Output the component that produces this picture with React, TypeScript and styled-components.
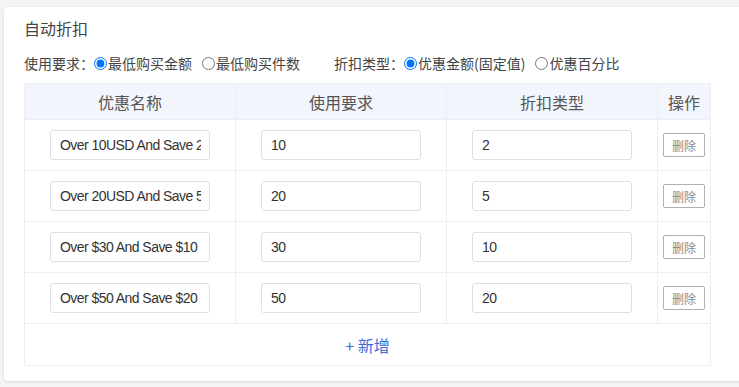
import React from "react";
import styled, { createGlobalStyle } from "styled-components";

const Global = createGlobalStyle`
  html, body { margin: 0; padding: 0; background: #f3f4f6; overflow: hidden; }
  body { font-family: "Noto Sans CJK SC", "Liberation Sans", sans-serif; }
  * { box-sizing: border-box; }
`;

const Page = styled.div`
  padding: 7px 0 0 4px;
  width: 739px;
  height: 387px;
`;

const Card = styled.div`
  width: 745px;
  background: #fff;
  border-radius: 4px;
  box-shadow: 0 1px 3px rgba(0, 0, 0, 0.12);
  padding: 10px 20px 15px 20px;
`;

const Title = styled.div`
  font-size: 16px;
  line-height: 22px;
  color: #444;
  font-family: "Noto Sans CJK SC", sans-serif;
`;

const Options = styled.div`
  margin-top: 14px;
  display: flex;
  align-items: center;
  height: 20px;
  font-size: 14px;
  color: #444;
  font-family: "Noto Sans CJK SC", sans-serif;
`;

const Group = styled.div<{ $gap?: number }>`
  display: flex;
  align-items: center;
  margin-right: ${(p) => p.$gap ?? 0}px;
`;

const GroupLabel = styled.span`
  white-space: nowrap;
`;

const RadioLabel = styled.label`
  display: flex;
  align-items: center;
  white-space: nowrap;
  margin-right: 10px;
  &:last-child { margin-right: 0; }
`;

const Radio = styled.input`
  width: 13px;
  height: 13px;
  margin: 0 1px 0 0;
`;

const Table = styled.table`
  margin-top: 10px;
  width: 686px;
  border-collapse: collapse;
  table-layout: fixed;
  border: 1px solid #ebeef5;
`;

const Th = styled.th`
  height: 36px;
  padding: 0;
  background: #f2f5fc;
  border: 1px solid #ebeef5;
  font-weight: normal;
  font-size: 16px;
  color: #555;
  font-family: "Noto Sans CJK SC", sans-serif;
  text-align: center;
`;

const Td = styled.td`
  height: 51px;
  padding: 0;
  border: 1px solid #ebeef5;
  text-align: center;
  vertical-align: middle;
`;

const AddTd = styled.td`
  height: 42px;
  padding: 0;
  border: 1px solid #ebeef5;
  text-align: center;
  vertical-align: middle;
`;

const TextInput = styled.input`
  width: 160px;
  height: 30px;
  border: 1px solid #dcdfe6;
  border-radius: 3px;
  padding: 0 8px 0 9px;
  font-size: 14px;
  letter-spacing: -0.55px;
  font-family: "Liberation Sans", Arial, sans-serif;
  color: #333;
  outline: none;
  background: #fff;
  display: block;
  margin: 0 auto;
`;

const DelButton = styled.button`
  width: 42px;
  height: 24px;
  padding: 0;
  border: 1px solid #b0b0b0;
  border-radius: 2px;
  background: #fff;
  color: #8a8a8a;
  font-size: 12px;
  font-family: "Noto Sans CJK SC", sans-serif;
  display: block;
  margin: 0 auto;
`;

const AddLink = styled.span`
  font-size: 16px;
  color: #3c6bd6;
  font-family: "Noto Sans CJK SC", sans-serif;
`;

const rows = [
  { name: "Over 10USD And Save 2USD", req: "10", val: "2" },
  { name: "Over 20USD And Save 5USD", req: "20", val: "5" },
  { name: "Over $30 And Save $10", req: "30", val: "10" },
  { name: "Over $50 And Save $20", req: "50", val: "20" },
];

export default function App() {
  return (
    <>
      <Global />
      <Page>
        <Card>
          <Title>自动折扣</Title>
          <Options>
            <Group $gap={34}>
              <GroupLabel>使用要求：</GroupLabel>
              <RadioLabel>
                <Radio type="radio" name="req" defaultChecked />
                最低购买金额
              </RadioLabel>
              <RadioLabel>
                <Radio type="radio" name="req" />
                最低购买件数
              </RadioLabel>
            </Group>
            <Group>
              <GroupLabel>折扣类型：</GroupLabel>
              <RadioLabel>
                <Radio type="radio" name="type" defaultChecked />
                优惠金额(固定值)
              </RadioLabel>
              <RadioLabel>
                <Radio type="radio" name="type" />
                优惠百分比
              </RadioLabel>
            </Group>
          </Options>
          <Table>
            <colgroup>
              <col style={{ width: 211 }} />
              <col style={{ width: 211 }} />
              <col style={{ width: 211 }} />
              <col style={{ width: 53 }} />
            </colgroup>
            <thead>
              <tr>
                <Th>优惠名称</Th>
                <Th>使用要求</Th>
                <Th>折扣类型</Th>
                <Th>操作</Th>
              </tr>
            </thead>
            <tbody>
              {rows.map((r, i) => (
                <tr key={i}>
                  <Td>
                    <TextInput defaultValue={r.name} />
                  </Td>
                  <Td>
                    <TextInput defaultValue={r.req} />
                  </Td>
                  <Td>
                    <TextInput defaultValue={r.val} />
                  </Td>
                  <Td>
                    <DelButton>删除</DelButton>
                  </Td>
                </tr>
              ))}
              <tr>
                <AddTd colSpan={4}>
                  <AddLink>+ 新增</AddLink>
                </AddTd>
              </tr>
            </tbody>
          </Table>
        </Card>
      </Page>
    </>
  );
}
